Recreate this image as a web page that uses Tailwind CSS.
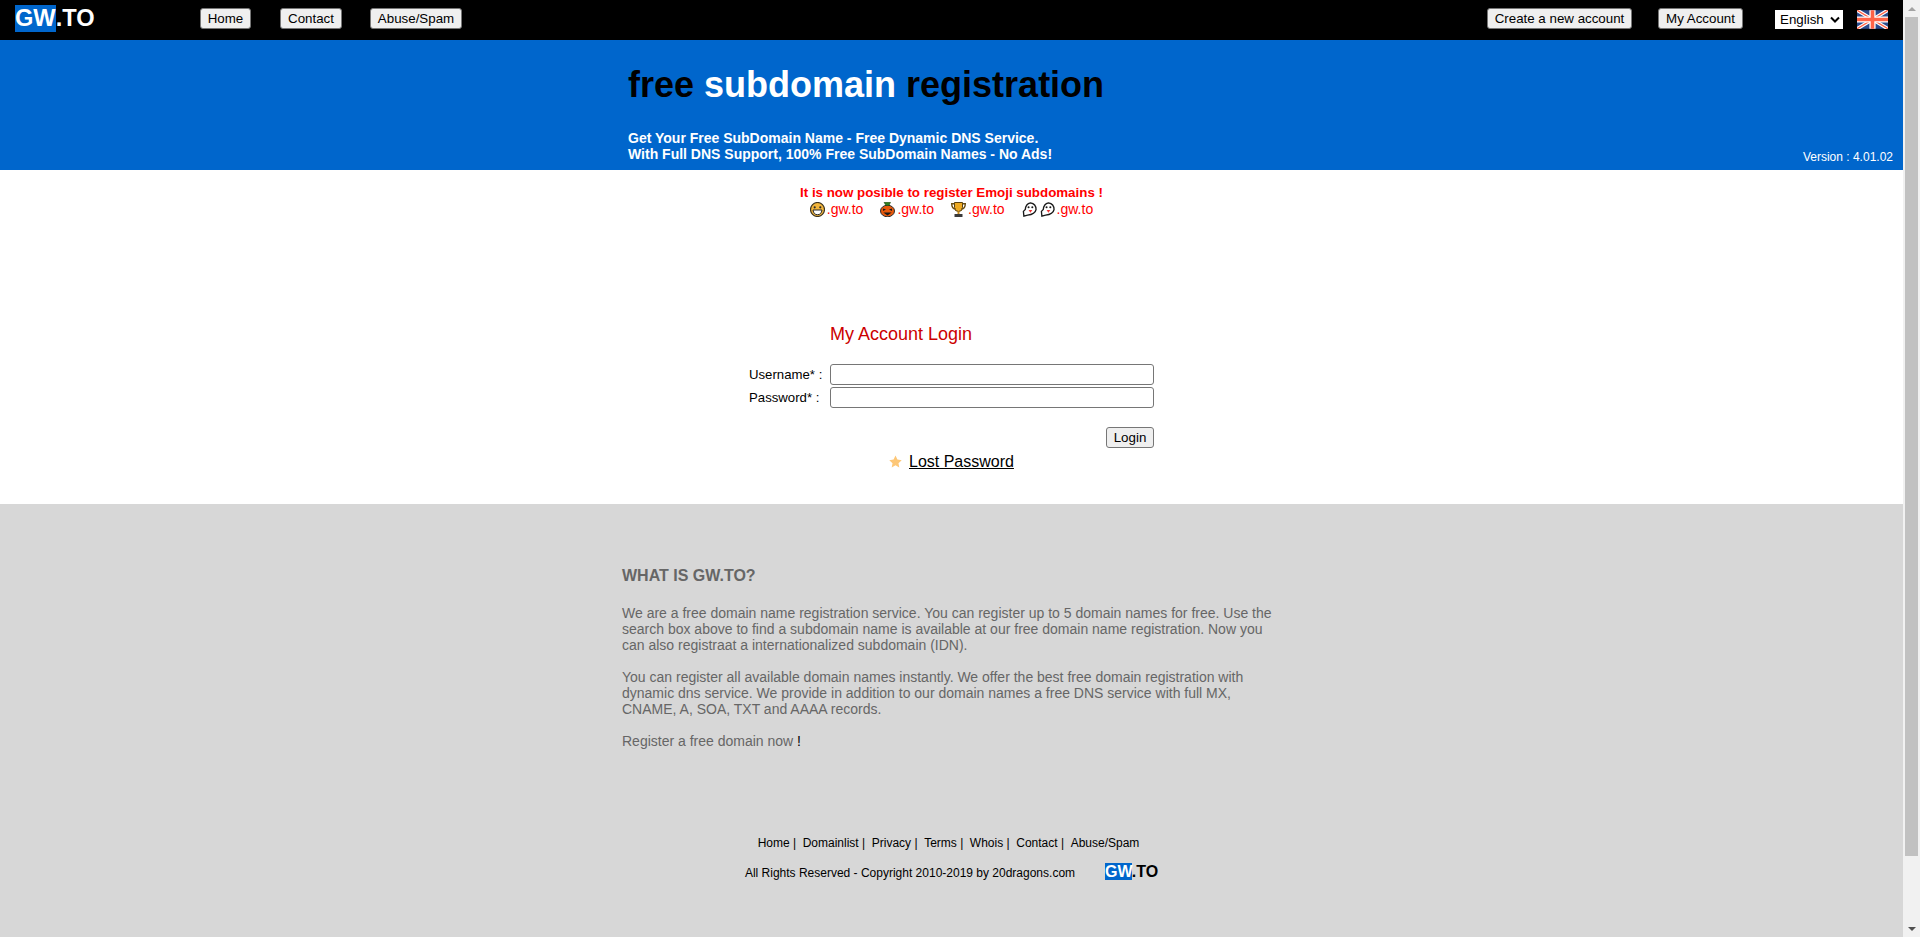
<!DOCTYPE html>
<html lang="en">
<head>
    <meta charset="UTF-8">
    <title>GW.TO free subdomain registration</title>
    <script src="https://cdn.jsdelivr.net/npm/@tailwindcss/browser@4"></script>
</head>
<body class="h-[937px] overflow-hidden flex bg-white text-black font-['Liberation_Sans',Arial,sans-serif]">
    <div class="w-[1903px] flex flex-col">
        <!-- top bar -->
        <div class="h-10 bg-black flex items-center pl-[15px] pr-[15px] pb-[3px] text-[13.33px]">
            <div class="w-[185px] flex items-center text-[23.6px] font-bold leading-[27px] text-white">
                <span class="bg-[#0066cc]">GW</span><span>.TO</span>
            </div>
            <div class="flex">
                <button class="h-[21px] w-[51px] bg-[#efefef] border border-[#767676] rounded-[3px] text-[13.33px]">Home</button>
                <button class="ml-[29px] h-[21px] w-[62px] bg-[#efefef] border border-[#767676] rounded-[3px] text-[13.33px]">Contact</button>
                <button class="ml-[28px] h-[21px] w-[92px] bg-[#efefef] border border-[#767676] rounded-[3px] text-[13.33px]">Abuse/Spam</button>
            </div>
            <div class="ml-auto flex items-center">
                <button class="h-[21px] w-[145px] bg-[#efefef] border border-[#767676] rounded-[3px] text-[13.33px]">Create a new account</button>
                <button class="ml-[26px] h-[21px] w-[85px] bg-[#efefef] border border-[#767676] rounded-[3px] text-[13.33px]">My Account</button>
                <div class="ml-[32px] mt-[2px] h-[19px] w-[68px] bg-white flex items-center justify-between pl-[5px] pr-[3px] text-[13.33px]">
                    <span>English</span>
                    <svg width="10" height="7" viewBox="0 0 10 7"><path d="M1 1.5 L5 5.5 L9 1.5" fill="none" stroke="#000" stroke-width="2"/></svg>
                </div>
                <svg class="ml-[14px] mt-[2px]" width="31" height="19" viewBox="0 0 60 36">
                    <rect width="60" height="36" fill="#2a4a8c"/>
                    <path d="M0 0 L60 36 M60 0 L0 36" stroke="#fff" stroke-width="7"/>
                    <path d="M0 0 L60 36 M60 0 L0 36" stroke="#ff6347" stroke-width="2.5"/>
                    <path d="M30 0 V36 M0 18 H60" stroke="#fff" stroke-width="12"/>
                    <path d="M30 0 V36 M0 18 H60" stroke="#ff6347" stroke-width="7"/>
                </svg>
            </div>
        </div>

        <!-- blue header -->
        <div class="h-[130px] bg-[#0066cc] relative pl-[628px]">
            <h1 class="pt-[22px] text-[36px] leading-[45px] font-bold">free <span class="text-white">subdomain</span> registration</h1>
            <p class="mt-[23px] text-[14px] leading-4 font-bold text-white">Get Your Free SubDomain Name - Free Dynamic DNS Service.<br>With Full DNS Support, 100% Free SubDomain Names - No Ads!</p>
            <span class="absolute right-[10px] bottom-[4px] text-[12px] text-white">Version : 4.01.02</span>
        </div>

        <!-- login -->
        <div class="h-[334px] bg-white">
            <div class="pt-[14px] text-center leading-[17px] text-[#ff0000]">
                <div class="font-bold text-[13.33px]">It is now posible to register Emoji subdomains !</div>
                <div class="flex justify-center items-center h-[17px] gap-[17px] text-[14px]">
                    <span class="flex items-center gap-[2px]">
                        <svg width="15" height="15" viewBox="0.5 0.5 15 15"><circle cx="8" cy="8" r="7" fill="#f2b53c" stroke="#3d3420" stroke-width="1.2"/><circle cx="5.2" cy="5.800" r="1.100" fill="#2a2a2a"/><circle cx="10.800" cy="5.800" r="1.100" fill="#2a2a2a"/><path d="M3.500 8.500 H12.500 Q11.800 13.200 8 13.200 Q4.200 13.200 3.500 8.500Z" fill="#fff" stroke="#2a2a2a"/></svg><span>.gw.to</span>
                    </span>
                    <span class="flex items-center gap-[2px]">
                        <svg width="15" height="15" viewBox="0.5 0.5 15 15"><ellipse cx="8" cy="9.500" rx="7" ry="5.800" fill="#e8590c" stroke="#2a2a2a"/><path d="M4.500 0.800 H11 L9.500 4 H6.500Z" fill="#2f7d1f" stroke="#1f4d14" stroke-width=".6"/><path d="M3.500 7 L6.500 8 L3.500 9.500Z M12.500 7 L9.500 8 L12.500 9.500Z" fill="#1a1a1a"/><path d="M3.800 11 H12.200 L8 14Z" fill="#1a1a1a"/></svg><span>.gw.to</span>
                    </span>
                    <span class="flex items-center gap-[2px]">
                        <svg width="15" height="15" viewBox="0.5 0.5 15 15"><path d="M4 1 H12 V6 Q12 10 8 10 Q4 10 4 6Z" fill="#eeaa22" stroke="#5a4210"/><path d="M4 2.200 H1.200 Q1.200 7 5 7.500 M12 2.200 H14.800 Q14.800 7 11 7.500" fill="none" stroke="#6b4e12" stroke-width="1.400"/><path d="M7 10 H9 V12.500 H7Z" fill="#c98a1a"/><path d="M4 12.500 H12 V15.500 H4Z" fill="#3a3a3a"/></svg><span>.gw.to</span>
                    </span>
                    <span class="flex items-center gap-[3px]">
                        <svg width="15" height="15" viewBox="0 0 16 16"><path d="M2 15 L1.500 10 L3.500 8 Q4 2 9 1 Q15 2 15 8 Q14 13 6 14Z" fill="#fff" stroke="#1a1a1a" stroke-width="1.400"/><circle cx="7" cy="5.500" r="1.100" fill="#1a1a1a"/><circle cx="11" cy="5.500" r="1.100" fill="#1a1a1a"/><path d="M7 8.500 H11 L9 11.500Z" fill="#e33"/></svg>
                        <svg width="15" height="15" viewBox="0 0 16 16"><path d="M2 15 L1.500 10 L3.500 8 Q4 2 9 1 Q15 2 15 8 Q14 13 6 14Z" fill="#fff" stroke="#1a1a1a" stroke-width="1.400"/><circle cx="7" cy="5.500" r="1.100" fill="#1a1a1a"/><circle cx="11" cy="5.500" r="1.100" fill="#1a1a1a"/><path d="M7 8.500 H11 L9 11.500Z" fill="#e33"/></svg><span class="-ml-[1px]">.gw.to</span>
                    </span>
                </div>
            </div>

            <div class="mt-[106px] ml-[830px] text-[18px] leading-[21px] text-[#cc0000]">My Account Login</div>
            <div class="mt-[19px] ml-[749px] grid grid-cols-[81px_325px] gap-y-[2px] text-[13.2px] items-center">
                <label>Username* :</label>
                <input type="text" class="h-[21px] w-[324px] bg-white border border-[#767676] rounded-[3px]">
                <label>Password* :</label>
                <input type="text" class="h-[21px] w-[324px] bg-white border border-[#767676] rounded-[3px]">
            </div>
            <div class="mt-[19px] ml-[1106px] w-[48px] flex justify-end">
                <button class="h-[21px] w-[48px] bg-[#efefef] border border-[#767676] rounded-[3px] text-[13.33px]">Login</button>
            </div>
            <div class="mt-[2px] ml-[889px] flex items-center h-[24px]">
                <svg class="-mt-[1px]" width="13" height="13" viewBox="0 0 24 24"><path d="M12 1 L15.500 8.500 L23.500 9.500 L17.500 15 L19 23 L12 19 L5 23 L6.500 15 L0.500 9.500 L8.500 8.500Z" fill="#fdc777"/></svg>
                <a href="#" class="ml-[7px] text-[16px] underline">Lost Password</a>
            </div>
        </div>

        <!-- gray info -->
        <div class="flex-1 bg-[#d7d7d7] text-[14px] leading-4 text-[#666666]">
            <div class="ml-[622px] w-[650px] pt-[63px]">
                <h2 class="text-[16px] leading-[18px] font-bold">WHAT IS GW.TO?</h2>
                <p class="mt-[20px]">We are a free domain name registration service. You can register up to 5 domain names for free. Use the search box above to find a subdomain name is available at our free domain name registration. Now you can also registraat a internationalized subdomain (IDN).</p>
                <p class="mt-4">You can register all available domain names instantly. We offer the best free domain registration with dynamic dns service. We provide in addition to our domain names a free DNS service with full MX, CNAME, A, SOA, TXT and AAAA records.</p>
                <p class="mt-4">Register a free domain now <span class="text-black">!</span></p>
            </div>
            <div class="mt-[87px] text-center text-[12px] leading-[14px] text-black">
                <div class="flex justify-center gap-[6.6px] pr-[6px]">
                    <span>Home |</span><span>Domainlist |</span><span>Privacy |</span><span>Terms |</span><span>Whois |</span><span>Contact |</span><span>Abuse/Spam</span>
                </div>
                <div class="mt-[16px] flex justify-center items-center">
                    <span>All Rights Reserved - Copyright 2010-2019 by 20dragons.com</span>
                    <span class="ml-[30px] -mt-[2px] text-[16px] font-bold leading-[16px]"><span class="bg-[#0066cc] text-white">GW</span>.TO</span>
                </div>
            </div>
        </div>
    </div>

    <!-- scrollbar -->
    <div class="w-[17px] bg-[#f1f1f1] flex flex-col items-center">
        <div class="h-[17px] flex items-center justify-center">
            <div class="w-0 h-0 border-x-[4px] border-x-transparent border-b-[4px] border-b-[#a3a3a3]"></div>
        </div>
        <div class="w-[13px] h-[839px] bg-[#c1c1c1]"></div>
        <div class="mt-auto h-[17px] flex items-center justify-center">
            <div class="w-0 h-0 border-x-[4px] border-x-transparent border-t-[4px] border-t-[#505050]"></div>
        </div>
    </div>
</body>
</html>
